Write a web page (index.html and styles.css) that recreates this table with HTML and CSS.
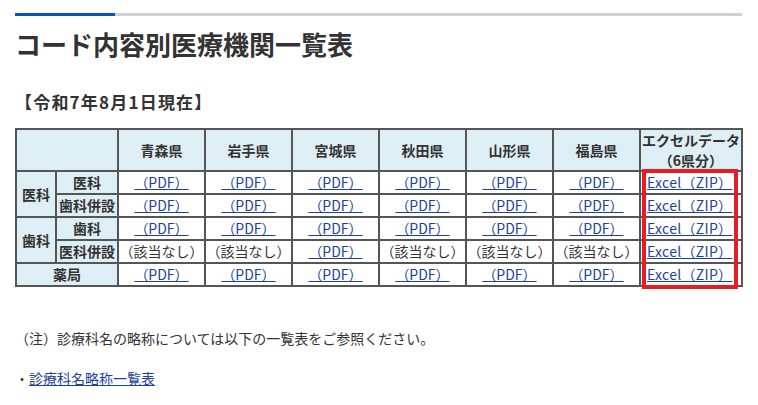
FILE: index.html
```html
<!DOCTYPE html>
<html lang="ja">
<head>
<meta charset="utf-8">
<title>コード内容別医療機関一覧表</title>
<link rel="stylesheet" href="styles.css">
</head>
<body>
<div class="page">
  <div class="topbar"><span class="topbar-accent"></span></div>
  <h1 class="title">コード内容別医療機関一覧表</h1>
  <p class="date">【令和7年8月1日現在】</p>
  <div class="table-wrap">
    <table class="list">
      <colgroup>
        <col class="c-grp"><col class="c-sub">
        <col class="c-pref"><col class="c-pref"><col class="c-pref"><col class="c-pref"><col class="c-pref"><col class="c-pref">
        <col class="c-xls">
      </colgroup>
      <thead>
        <tr>
          <th colspan="2"></th>
          <th>青森県</th><th>岩手県</th><th>宮城県</th><th>秋田県</th><th>山形県</th><th>福島県</th>
          <th class="xls-head">エクセルデータ<br>（6県分）</th>
        </tr>
      </thead>
      <tbody>
        <tr>
          <th rowspan="2" class="grp">医科</th><th>医科</th>
          <td><a href="#">（PDF）</a></td><td><a href="#">（PDF）</a></td><td><a href="#">（PDF）</a></td><td><a href="#">（PDF）</a></td><td><a href="#">（PDF）</a></td><td><a href="#">（PDF）</a></td>
          <td class="xls"><a href="#">Excel（ZIP）</a></td>
        </tr>
        <tr>
          <th>歯科併設</th>
          <td><a href="#">（PDF）</a></td><td><a href="#">（PDF）</a></td><td><a href="#">（PDF）</a></td><td><a href="#">（PDF）</a></td><td><a href="#">（PDF）</a></td><td><a href="#">（PDF）</a></td>
          <td class="xls"><a href="#">Excel（ZIP）</a></td>
        </tr>
        <tr>
          <th rowspan="2" class="grp">歯科</th><th>歯科</th>
          <td><a href="#">（PDF）</a></td><td><a href="#">（PDF）</a></td><td><a href="#">（PDF）</a></td><td><a href="#">（PDF）</a></td><td><a href="#">（PDF）</a></td><td><a href="#">（PDF）</a></td>
          <td class="xls"><a href="#">Excel（ZIP）</a></td>
        </tr>
        <tr>
          <th>医科併設</th>
          <td>（該当なし）</td><td>（該当なし）</td><td><a href="#">（PDF）</a></td><td>（該当なし）</td><td>（該当なし）</td><td>（該当なし）</td>
          <td class="xls"><a href="#">Excel（ZIP）</a></td>
        </tr>
        <tr>
          <th colspan="2">薬局</th>
          <td><a href="#">（PDF）</a></td><td><a href="#">（PDF）</a></td><td><a href="#">（PDF）</a></td><td><a href="#">（PDF）</a></td><td><a href="#">（PDF）</a></td><td><a href="#">（PDF）</a></td>
          <td class="xls"><a href="#">Excel（ZIP）</a></td>
        </tr>
      </tbody>
    </table>
    <div class="highlight"></div>
  </div>
  <p class="note">（注）診療科名の略称については以下の一覧表をご参照ください。</p>
  <p class="linkline">・<a href="#">診療科名略称一覧表</a></p>
</div>
</body>
</html>
```

FILE: styles.css
```css
html, body {
  margin: 0;
  padding: 0;
  background: #fff;
}
body {
  font-family: "Noto Sans CJK JP", "Noto Sans", sans-serif;
  color: #333;
  font-size: 14px;
}
.page {
  padding: 13px 16px 0 15px;
}
.topbar {
  height: 3px;
  background: #cdd0d8;
  display: flex;
}
.topbar-accent {
  width: 100px;
  background: #0b4fc7;
}
.title {
  margin: 10px 0 0;
  font-size: 26px;
  line-height: 36px;
  font-weight: 700;
  color: #333;
}
.date {
  margin: 29px 0 0;
  font-size: 17px;
  line-height: 22px;
  font-weight: 700;
  letter-spacing: 1.2px;
  color: #333;
}
.table-wrap {
  position: relative;
  margin-top: 15px;
}
.list {
  border-collapse: collapse;
  width: 727px;
  table-layout: fixed;
}
.c-grp { width: 40px; }
.c-sub { width: 62px; }
.c-pref { width: 87px; }
.c-xls { width: 102px; }
.list th, .list td {
  border: 2px solid #555;
  padding: 0;
  text-align: center;
  font-size: 14px;
  line-height: 21px;
  white-space: nowrap;
}
.list th {
  background: #deeef5;
  font-weight: 700;
  color: #333;
}
.list thead th {
  height: 40px;
  line-height: 20px;
}
.list tbody tr {
  height: 23px;
}
.list td {
  background: #fff;
  color: #333;
}
.list a {
  color: #1d3f9e;
  text-decoration: underline;
}
.list td.xls {
  text-align: left;
  padding-left: 6px;
  letter-spacing: 0.3px;
}
.highlight {
  position: absolute;
  left: 627px;
  top: 41px;
  width: 88px;
  height: 112px;
  border: 4px solid #e81c24;
  pointer-events: none;
}
.note {
  margin: 40px 0 0;
  line-height: 22px;
  color: #333;
}
.linkline {
  margin: 18px 0 0;
  line-height: 22px;
  color: #333;
}
.linkline a {
  color: #1d3f9e;
  text-decoration: underline;
}
```
